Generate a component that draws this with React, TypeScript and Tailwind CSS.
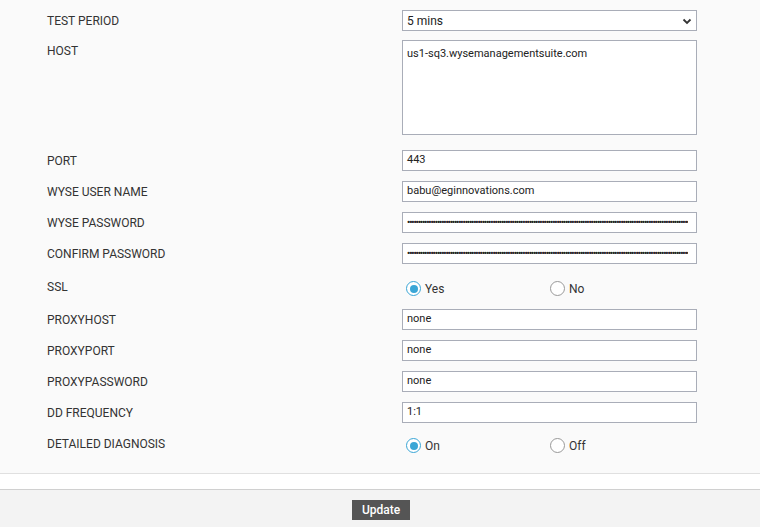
import React from 'react';

const dots = '•'.repeat(140);

const Input = ({ value, pw }: { value: string; pw?: boolean }) => (
  <div className="w-[295px] h-[21px] border border-[#a9adb8] bg-white px-[4px] flex items-center text-[11px] text-[#222] overflow-hidden whitespace-nowrap">
    {pw ? <span className="block w-[281px] overflow-hidden text-[9px] tracking-[-1.1px] font-bold leading-none">{dots}</span> : value}
  </div>
);

const Radio = ({ on, label }: { on?: boolean; label: string }) => (
  <div className="flex items-center gap-[4px] w-[144px] text-[12px] text-[#333]">
    <span className={`w-[15px] h-[15px] rounded-full border flex items-center justify-center bg-white ${on ? 'border-[#3aa6d6]' : 'border-[#999]'}`}>
      {on && <span className="w-[8px] h-[8px] rounded-full bg-[#3aa6d6]" />}
    </span>
    {label}
  </div>
);

const Row = ({ label, children, h = 'h-[21px]', top }: { label: string; children: React.ReactNode; h?: string; top?: boolean }) => (
  <div className={`flex ${top ? 'items-start' : 'items-center'} ${h}`}>
    <div className={`w-[355px] text-[12px] text-[#333] ${top ? 'pt-[2px]' : ''}`}>{label}</div>
    {children}
  </div>
);

export default function App() {
  return (
    <div className="w-[760px] h-[527px] bg-[#fafafa] flex flex-col" style={{ fontFamily: 'Roboto, "Liberation Sans", sans-serif' }}>
      <div className="pl-[47px] pt-[10px] flex flex-col h-[474px] border-b border-[#e0e0e0]">
        <Row label="TEST PERIOD">
          <div className="w-[295px] h-[21px] border border-[#a9adb8] bg-white px-[4px] flex items-center justify-between text-[12px] text-[#222]">
            5 mins
            <svg width="10" height="10" viewBox="0 0 10 10"><path d="M1.5 3.5 5 7l3.5-3.5" stroke="#333" strokeWidth="1.8" fill="none" /></svg>
          </div>
        </Row>
        <div className="h-[9px]" />
        <Row label="HOST" h="h-[95px]" top>
          <div className="w-[295px] h-[95px] border border-[#a9adb8] bg-white px-[4px] pt-[5px] text-[11px] text-[#222]">us1-sq3.wysemanagementsuite.com</div>
        </Row>
        <div className="flex flex-col gap-[10px] mt-[15px]">
          <Row label="PORT"><Input value="443" /></Row>
          <Row label="WYSE USER NAME"><Input value="babu@eginnovations.com" /></Row>
          <Row label="WYSE PASSWORD"><Input value="" pw /></Row>
          <Row label="CONFIRM PASSWORD"><Input value="" pw /></Row>
          <Row label="SSL" h="h-[25px]">
            <div className="flex pl-[4px] pt-[4px]"><Radio on label="Yes" /><Radio label="No" /></div>
          </Row>
          <Row label="PROXYHOST"><Input value="none" /></Row>
          <Row label="PROXYPORT"><Input value="none" /></Row>
          <Row label="PROXYPASSWORD"><Input value="none" /></Row>
          <Row label="DD FREQUENCY"><Input value="1:1" /></Row>
          <Row label="DETAILED DIAGNOSIS">
            <div className="flex pl-[4px] pt-[4px]"><Radio on label="On" /><Radio label="Off" /></div>
          </Row>
        </div>
      </div>
      <div className="h-[16px] bg-white border-b border-[#d0d0d0]" />
      <div className="flex-1 bg-[#f3f3f3] flex justify-center pt-[10px]">
        <button className="h-[20px] w-[58px] bg-[#555] text-white text-[12px] font-medium ml-[2px]">Update</button>
      </div>
    </div>
  );
}
